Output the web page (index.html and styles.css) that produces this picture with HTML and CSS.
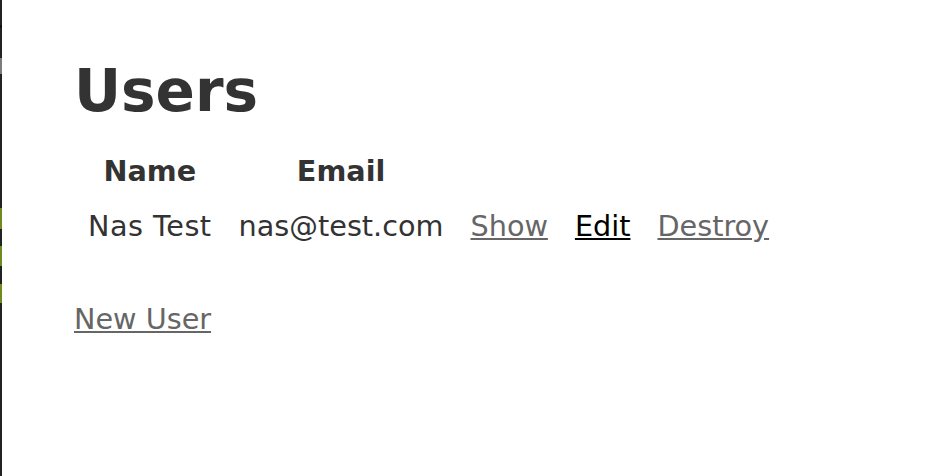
FILE: index.html
```html
<!DOCTYPE html>
<html>
<head>
<meta charset="utf-8">
<title>Users</title>
<link rel="stylesheet" href="styles.css">
</head>
<body>
<div class="edge"></div>
<main class="page">
  <h1 class="title">Users</h1>
  <table class="users">
    <thead>
      <tr><th>Name</th><th>Email</th><th></th><th></th><th></th></tr>
    </thead>
    <tbody>
      <tr>
        <td class="name">Nas Test</td>
        <td>nas@test.com</td>
        <td><a class="link visited" href="#">Show</a></td>
        <td><a class="link" href="#">Edit</a></td>
        <td><a class="link visited" href="#">Destroy</a></td>
      </tr>
    </tbody>
  </table>
  <p class="new"><a class="link visited" href="#">New User</a></p>
</main>
</body>
</html>
```

FILE: styles.css
```css
html, body {
  margin: 0;
  padding: 0;
  background: #fff;
  height: 100%;
}
body {
  display: flex;
  color: #333;
  font-family: "DejaVu Sans", Verdana, sans-serif;
  font-size: 28.7px;
}
.edge {
  width: 2px;
  flex: none;
  background: linear-gradient(to bottom,
    #222 0, #222 25px, #111 25px, #111 28px, #222 28px,
    #222 58px, #7c7c7c 58px, #7c7c7c 74px, #222 74px,
    #222 208px, #6f8a1e 208px, #6f8a1e 229px, #222 229px,
    #222 246px, #6f8a1e 246px, #6f8a1e 266px, #222 266px,
    #222 284px, #6f8a1e 284px, #6f8a1e 303px, #222 303px,
    #222 100%);
}
.page {
  padding: 56px 0 0 72px;
}
.title {
  margin: 0 0 17px 0;
  font-size: 58px;
  font-weight: bold;
  line-height: 70px;
}
.users {
  border-collapse: separate;
  border-spacing: 3px;
  margin-left: -1px;
}
.users th, .users td {
  padding: 8px 12px;
  line-height: 34px;
}
.users th {
  padding-bottom: 10px;
  font-weight: bold;
  text-align: center;
}
.users td {
  text-align: left;
}
.users .name {
  letter-spacing: 0.5px;
}
.link {
  color: #000;
}
.link.visited {
  color: #666;
}
.new {
  margin: 48px 0 0 0;
}
```
